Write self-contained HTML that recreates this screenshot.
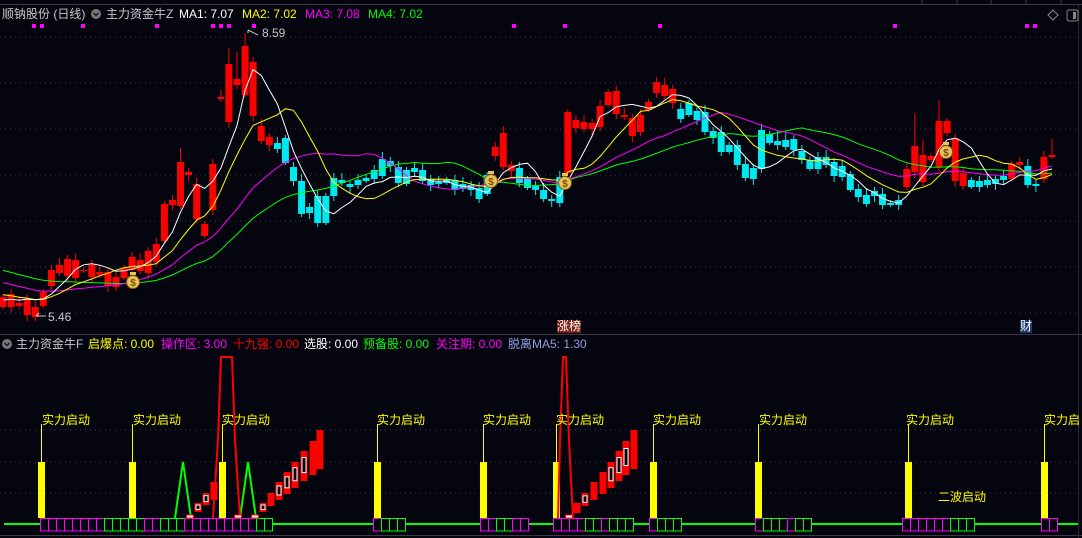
<!DOCTYPE html>
<html><head><meta charset="utf-8"><style>
html,body{margin:0;padding:0;background:#05050f;}
body{width:1082px;height:538px;overflow:hidden;position:relative;font-family:"Liberation Sans","Noto Sans CJK SC",sans-serif;}
.t{position:absolute;font-size:12px;white-space:nowrap;line-height:14px;}
svg{position:absolute;left:0;top:0;}
</style></head><body>
<svg id="s" width="1082" height="538" xmlns="http://www.w3.org/2000/svg"></svg>
<div class="t" style="left:2px;top:7px;color:#c8c8c8">顺钠股份 (日线)</div>
<div class="t" style="left:106px;top:7px;color:#c8c8c8">主力资金牛Z</div>
<div class="t" style="left:179px;top:7px;color:#ffffff">MA1: 7.07</div>
<div class="t" style="left:242px;top:7px;color:#ffff00">MA2: 7.02</div>
<div class="t" style="left:305px;top:7px;color:#ff00ff">MA3: 7.08</div>
<div class="t" style="left:368px;top:7px;color:#00ff00">MA4: 7.02</div>
<div class="t" style="left:262px;top:26px;color:#c8c8c8">8.59</div>
<div class="t" style="left:48px;top:310px;color:#c8c8c8">5.46</div>
<div class="t" style="left:16px;top:337px;color:#c8c8c8">主力资金牛F</div>
<div class="t" style="left:88px;top:337px;color:#ffff00">启爆点: 0.00</div>
<div class="t" style="left:161px;top:337px;color:#ff00ff">操作区: 3.00</div>
<div class="t" style="left:233px;top:337px;color:#ff0000">十九强: 0.00</div>
<div class="t" style="left:304px;top:337px;color:#ffffff">选股: 0.00</div>
<div class="t" style="left:363px;top:337px;color:#00ff00">预备股: 0.00</div>
<div class="t" style="left:436px;top:337px;color:#ff00ff">关注期: 0.00</div>
<div class="t" style="left:508px;top:337px;color:#8fa0e0">脱离MA5: 1.30</div>
<div class="t" style="left:557px;top:320px;color:#fff;background:#7a2010;font-size:12px;line-height:13px">涨榜</div>
<div class="t" style="left:1020px;top:320px;color:#fff;background:#1c3a6a;font-size:12px;line-height:13px">财</div>
<div class="t" style="left:42px;top:413px;color:#ffff00">实力启动</div>
<div class="t" style="left:133px;top:413px;color:#ffff00">实力启动</div>
<div class="t" style="left:222px;top:413px;color:#ffff00">实力启动</div>
<div class="t" style="left:377px;top:413px;color:#ffff00">实力启动</div>
<div class="t" style="left:483px;top:413px;color:#ffff00">实力启动</div>
<div class="t" style="left:556px;top:413px;color:#ffff00">实力启动</div>
<div class="t" style="left:653px;top:413px;color:#ffff00">实力启动</div>
<div class="t" style="left:759px;top:413px;color:#ffff00">实力启动</div>
<div class="t" style="left:906px;top:413px;color:#ffff00">实力启动</div>
<div class="t" style="left:1044px;top:413px;color:#ffff00">实力启</div>
<div class="t" style="left:938px;top:490px;color:#ffff00">二波启动</div>
<script>
var D=[[297,307,1],[294,307,1],[303,306,1],[298,315,1],[307,317,1],[292,306,1],[270,286,1],[265,273,1],[259,276,1],[260,278,1],[270,271,1],[265,277,1],[272,275,1],[272,286,1],[277,287,1],[268,278,1],[257,270,1],[260,271,1],[251,273,1],[244,262,1],[204,241,1],[200,205,1],[162,206,1],[172,175,1],[184,219,1],[224,236,1],[164,210,1],[97,99,1],[64,122,1],[79,85,1],[46,95,1],[62,116,1],[126,141,1],[137,145,1],[143,149,0],[138,163,0],[167,181,0],[181,214,0],[207,213,0],[196,223,0],[196,223,0],
[178,196,0],[180,183,0],[184,187,0],[180,185,0],[178,181,0],[170,179,0],[159,176,0],[161,166,0],[167,183,0],[170,184,0],[168,172,0],[170,181,0],[179,185,0],[182,184,0],[180,183,0],[180,190,0],[184,189,0],[185,190,0],[188,199,0],[175,194,0],[147,156,1],[133,167,1],[165,171,1],[168,183,0],[179,188,0],[186,190,0],[190,199,0],[199,201,0],
[177,203,0],[112,173,1],[120,128,1],[122,129,1],[123,129,1],[106,127,1],[92,105,1],[91,114,1],[115,117,1],[118,136,1],[115,132,1],[102,110,1],[82,93,1],[85,96,1],[89,103,1],[109,119,0],[103,115,0],[111,120,0],[112,132,0],[131,138,0],[132,152,0],[145,152,0],[145,165,0],[164,178,0],[168,179,0],[130,169,0],[134,143,0],[141,145,0],[140,147,0],[139,150,0],[151,160,0],[160,169,0],[157,169,0],[157,165,0],[162,176,0],[166,177,0],[174,190,0],[189,197,0],[195,204,0],[191,196,0],[194,205,0],[203,205,0],[200,205,0],[169,187,1],[146,172,1],[155,182,1],[156,160,1],[121,167,1],[121,133,1],[138,181,1],[173,186,1],[180,187,0],[181,187,0],[180,185,0],[179,184,0],[176,180,0],[164,179,1],[162,165,1],[166,185,0],[184,186,0],[157,179,1],[155,157,1]];
var N=D.length,st=1049/(N-1),h='';
function X(i){return 3+i*st;}
[37,83,129,175,221,267,313,430,462,493].forEach(function(y){h+='<line x1="0" x2="1078" y1="'+y+'" y2="'+y+'" stroke="#3c3c4c" stroke-dasharray="1,4"/>';});
h+='<line x1="0" x2="1082" y1="4.5" y2="4.5" stroke="#3a3a44"/>';
[922,957,991,1026,1061].forEach(function(x){h+='<line x1="'+x+'" x2="'+x+'" y1="0" y2="5" stroke="#3a3a44"/>';});
h+='<line x1="0" x2="1082" y1="334.5" y2="334.5" stroke="#3a3a44"/><line x1="0" x2="1082" y1="535.5" y2="535.5" stroke="#3a3a44"/>';
h+='<line x1="1078.5" x2="1078.5" y1="5" y2="538" stroke="#2a2a34"/>';
h+='<path d="M1053 10 L1058 15 L1053 20 L1048 15Z" fill="none" stroke="#888"/><rect x="1067" y="10" width="11" height="11" rx="2" fill="none" stroke="#888"/><rect x="1073" y="12" width="3" height="7" fill="#888"/>';
h+='<circle cx="96" cy="14" r="5" fill="#777"/><path d="M93.5 13 L96 15.5 L98.5 13" stroke="#111" fill="none" stroke-width="1.3"/>';
h+='<circle cx="7" cy="344" r="5" fill="#777"/><path d="M4.5 343 L7 345.5 L9.5 343" stroke="#111" fill="none" stroke-width="1.3"/>';
[34,42,83,157,213,221,229,254,514,565,660,895,1027,1035].forEach(function(x){h+='<rect x="'+(x-2)+'" y="24" width="4" height="4" fill="#ff00ff"/>';});
var C=[];for(var k=0;k<30;k++)C.push(232+k*2.5);
D.forEach(function(d){C.push(d[2]?d[0]:d[1]);});
function ma(n,col){var p='';for(var i=0;i<N;i++){var j=i+30,s=0;for(var m=0;m<n;m++)s+=C[j-m];p+=(i?'L':'M')+X(i).toFixed(1)+' '+(s/n).toFixed(1);}h+='<path d="'+p+'" fill="none" stroke="'+col+'" stroke-width="1"/>';}
D.forEach(function(d,i){var x=X(i),c=d[2]?'#ff0000':'#00e8f0',t=d[0],b=d[1];if(b-t<1){b=t+1.5;}
var ht=t-3-((i*7)%5),lb=b+2+((i*3)%5);
if(i==30)ht=33;if(i==28)ht=48;if(i==29)ht=52;if(i==22)ht=148;if(i==96)ht=130;if(i==113)ht=113;if(i==116)ht=100;if(i==117)ht=118;if(i==114)ht=140;if(i==130)ht=139;
h+='<line x1="'+x.toFixed(1)+'" x2="'+x.toFixed(1)+'" y1="'+ht+'" y2="'+lb+'" stroke="'+c+'"/>';
h+='<rect x="'+(x-3.5).toFixed(1)+'" y="'+t+'" width="7" height="'+(b-t)+'" fill="'+c+'"/>';});
ma(30,'#00ff00');ma(20,'#ff00ff');ma(10,'#ffff00');ma(5,'#ffffff');
h+='<path d="M248 33 L248 30 M248 30 L258 35" stroke="#ccc" fill="none"/><path d="M36 316 L46 316 M36 316 L39 313" stroke="#ccc" fill="none"/>';
[[133,282],[491,181],[565,183],[946,152]].forEach(function(p){h+='<circle cx="'+p[0]+'" cy="'+p[1]+'" r="6.5" fill="#e8c25a" stroke="#8a5a10"/><rect x="'+(p[0]-3)+'" y="'+(p[1]-10)+'" width="6" height="3" fill="#e8c25a"/><text x="'+p[0]+'" y="'+(p[1]+4)+'" font-size="10" font-weight="bold" fill="#7a4a00" text-anchor="middle" font-family="Liberation Sans">$</text>';});
h+='<line x1="4" x2="1078" y1="524" y2="524" stroke="#00ff00" stroke-width="2"/>';
var bars=[40,131,221,376,482,555,652,757,907,1043];
bars.forEach(function(x){h+='<line x1="'+(x+1.5)+'" x2="'+(x+1.5)+'" y1="424" y2="462" stroke="#ffff00"/><rect x="'+(x-2)+'" y="462" width="7" height="56" fill="#ffff00"/>';});
var groups=[[40,'mmmmmmmmgggggmmgggmmmmmmmmmgg'],[373,'mggg'],[480,'mmggmm'],[553,'mmmmggmggg'],[649,'mggg'],[755,'mgggmgg'],[902,'mmmmmmggg'],[1041,'mm']];
groups.forEach(function(g){for(var k=0;k<g[1].length;k++){var c=g[1][k]=='m'?'#ff00ff':'#00ff00';h+='<rect x="'+(g[0]+k*8+0.5)+'" y="518.5" width="8" height="12.5" fill="#05050f" stroke="'+c+'"/>';}});
h+='<path d="M175 518 L183 462 L191 518" stroke="#00ff00" stroke-width="2" fill="none"/><path d="M240 518 L248 462 L256 518" stroke="#00ff00" stroke-width="2" fill="none"/>';
h+='<path d="M213 518 L218 440 L221 357 L232 357 L235 440 L240 518" stroke="#ff0000" stroke-width="2" fill="none"/>';
h+='<path d="M558 518 L560 440 L563 357 L566 357 L569 440 L573 518" stroke="#ff0000" stroke-width="2" fill="none"/>';
var rc=[[190,515,518,2],[198,503,512,1],[206,493,505,1],[214,482,500,0],[238,515,518,2],[255,515,518,2],[263,503,512,1],[271,493,506,0],[279,482,500,1],[287,472,494,1],[295,462,488,1],[304,451,481,1],[313,441,475,0],[320,430,469,0],
[569,515,518,2],[577,503,513,0],[585,493,506,1],[594,482,500,0],[603,472,494,0],[611,462,488,1],[619,451,481,1],[626,441,475,1],[634,430,469,0]];
rc.forEach(function(r){var x=r[0]-3.5;if(r[3]==2){h+='<rect x="'+x+'" y="'+r[1]+'" width="7" height="3" fill="#fff" stroke="#ff0000"/>';return;}
h+='<rect x="'+x+'" y="'+r[1]+'" width="7" height="'+(r[2]-r[1])+'" fill="#ff0000"/>';
if(r[3]==1){var m=(r[2]-r[1]);h+='<rect x="'+(x+1.5)+'" y="'+(r[1]+m*0.22)+'" width="4" height="'+(m*0.5)+'" fill="#05050f" stroke="#fff"/>';}});
document.getElementById('s').innerHTML=h;
</script>
</body></html>
